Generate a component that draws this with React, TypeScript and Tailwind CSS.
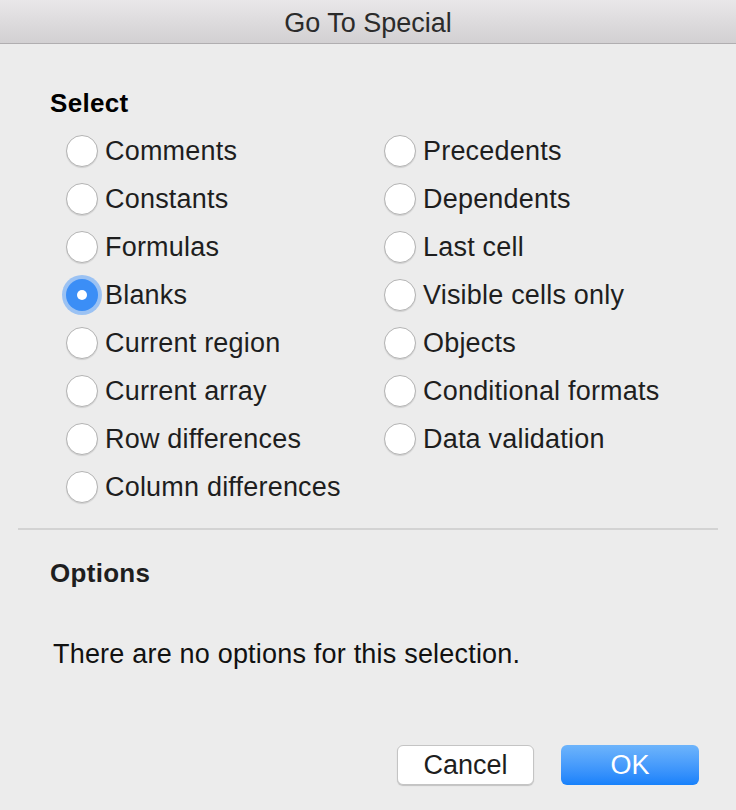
import React from "react";

const left = [
  "Comments",
  "Constants",
  "Formulas",
  "Blanks",
  "Current region",
  "Current array",
  "Row differences",
  "Column differences",
];
const right = [
  "Precedents",
  "Dependents",
  "Last cell",
  "Visible cells only",
  "Objects",
  "Conditional formats",
  "Data validation",
];

function Radio({ label, checked }: { label: string; checked?: boolean }) {
  return (
    <div className="flex items-center h-[48px]">
      {checked ? (
        <div className="w-[32px] h-[32px] rounded-full flex items-center justify-center bg-[#3b8ef6] shadow-[0_0_0_4px_rgba(90,160,250,0.55)]">
          <div className="w-[10px] h-[10px] rounded-full bg-white" />
        </div>
      ) : (
        <div className="w-[32px] h-[32px] rounded-full bg-white border border-[#b4b4b4] shadow-[0_1px_1px_rgba(0,0,0,0.12)]" />
      )}
      <span className="ml-[7px] text-[27px] tracking-[0.2px] text-[#1e1e1e] leading-none">{label}</span>
    </div>
  );
}

export default function App() {
  return (
    <div
      className="w-[736px] h-[810px] bg-[#ececec] flex flex-col overflow-hidden"
      style={{ fontFamily: '"Liberation Sans", Arial, sans-serif' }}
    >
      <div className="h-[44px] shrink-0 flex items-center justify-center pt-[4px] bg-gradient-to-b from-[#e9e7e9] to-[#d2d0d2] border-b border-[#b0aeb0]">
        <span className="text-[27px] text-[#2b2b2b] leading-none">Go To Special</span>
      </div>
      <div className="px-[50px] pt-[46px]">
        <div className="text-[26px] tracking-[0.3px] font-bold text-black leading-none">Select</div>
      </div>
      <div className="flex pl-[66px] pt-[11px]">
        <div className="w-[318px] flex flex-col">
          {left.map((l) => (
            <Radio key={l} label={l} checked={l === "Blanks"} />
          ))}
        </div>
        <div className="flex flex-col">
          {right.map((l) => (
            <Radio key={l} label={l} />
          ))}
        </div>
      </div>
      <div className="mx-[18px] mt-[17px] h-[2px] bg-[#d3d3d3]" />
      <div className="px-[50px] pt-[30px]">
        <div className="text-[26px] tracking-[0.3px] font-bold text-[#1e1e1e] leading-none">Options</div>
      </div>
      <div className="pl-[53px] pt-[55px]">
        <div className="text-[27px] tracking-[0.2px] text-[#111] leading-none">There are no options for this selection.</div>
      </div>
      <div className="flex justify-end gap-[27px] pr-[37px] pt-[77px]">
        <button className="w-[137px] h-[40px] rounded-[6px] bg-white border border-[#c4c4c4] shadow-[0_1px_1px_rgba(0,0,0,0.18)] text-[27px] text-[#1e1e1e] leading-none">
          Cancel
        </button>
        <button className="w-[138px] h-[40px] rounded-[6px] bg-gradient-to-b from-[#6db4fb] to-[#1681fb] text-[27px] text-white leading-none">
          OK
        </button>
      </div>
    </div>
  );
}
